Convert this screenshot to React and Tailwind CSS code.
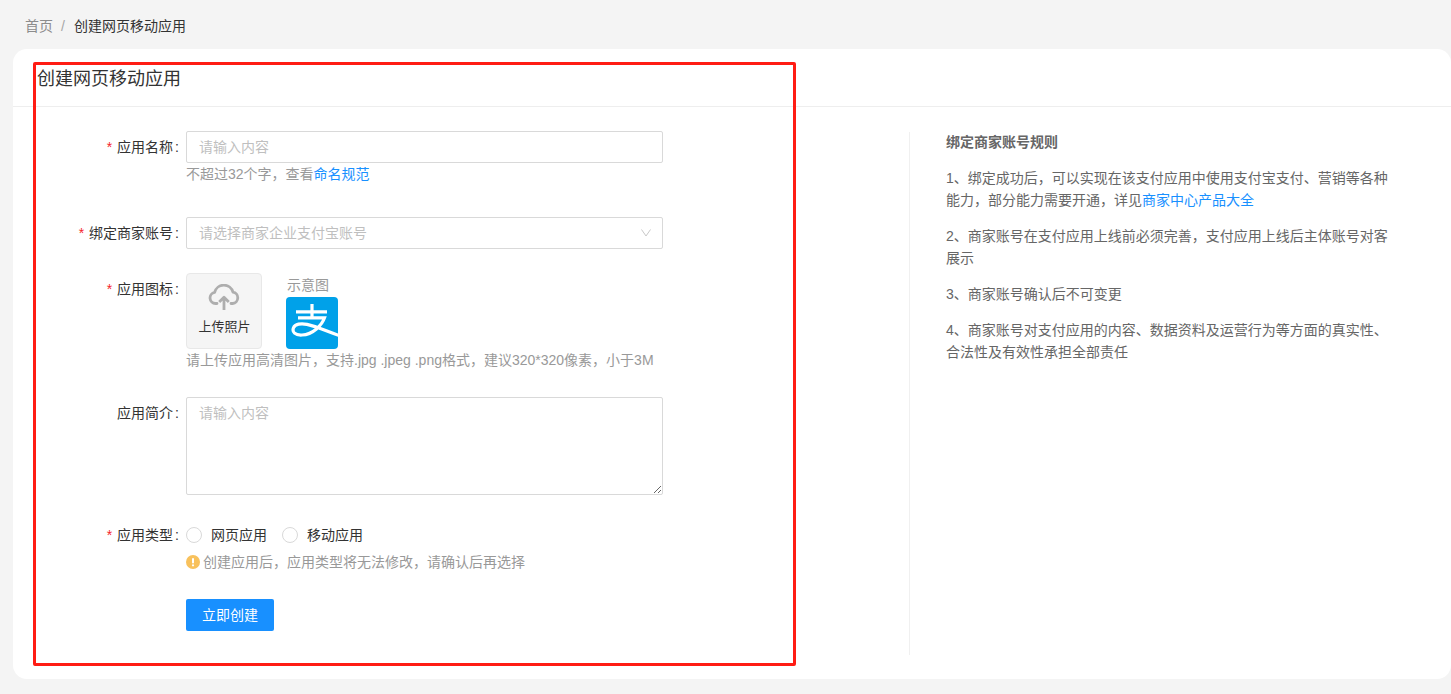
import React from 'react';

const FONT = "font-['Liberation_Sans','Noto_Sans_CJK_SC',sans-serif]";

const FormRow = ({ label, required, labelClass = 'h-[32px]', className = '', children }) => (
    <div className={`flex items-start ${className}`}>
        <div className={`w-[166px] mr-[7px] shrink-0 flex items-center justify-end text-[#333] ${labelClass}`}>
            {required && <span className="text-[#f5222d] mr-[5px]">*</span>}
            {label}<span className="ml-[2px]">:</span>
        </div>
        <div className="min-w-0">{children}</div>
    </div>
);

const CloudIcon = () => (
    <svg width="32" height="28" viewBox="0 0 32 28" fill="none" stroke="#aeaeae" strokeWidth="2.8">
        <path d="M9 19.5H7.5A5.6 5.6 0 0 1 6.6 8.4 A9.5 9.5 0 0 1 25 8.2 A5.7 5.7 0 0 1 24.6 19.5H23" strokeLinecap="round" strokeLinejoin="round" />
        <path d="M16 26V14M11.2 18l4.8-4.8 4.8 4.8" strokeLinejoin="round" />
    </svg>
);

const AlipayLogo = () => (
    <svg width="52" height="52" viewBox="0 0 52 52" fill="none" className="block rounded-[4px]">
        <rect width="52" height="52" fill="#00a1e9" />
        <g stroke="#fff" strokeWidth="3.2">
            <path d="M10 14.8H41M26 7V21" />
            <path d="M12 20.8H38.5C36 28 27 37.6 16 38C9 38.4 6 35 7.4 31C9 27 15 26 21 27.4C31 29.6 40 34 53 38.5" />
        </g>
    </svg>
);

const App = () => (
    <div className={`relative h-[694px] bg-[#f4f4f4] overflow-hidden text-[14px] leading-[22px] ${FONT}`}>
        {/* breadcrumb */}
        <div className="h-[49px] pl-[25px] pt-[15px] flex items-start">
            <span className="text-[#8c8c8c]">首页</span>
            <span className="text-[#a6a6a6] ml-[8px] mr-[9px]">/</span>
            <span className="text-[#333]">创建网页移动应用</span>
        </div>

        <div className="ml-[13px] h-[630px] bg-white rounded-[14px]">
            <div className="h-[58px] pl-[24px] pt-[16px] border-b border-[#eeeeee] text-[18px] leading-[28px] text-[#333]">
                创建网页移动应用
            </div>

            <div className="flex">
                {/* form */}
                <div className="w-[896px] shrink-0 pt-[24px]">
                    <FormRow label="应用名称" required>
                        <input
                            placeholder="请输入内容"
                            className="block w-[477px] h-[32px] px-[12px] border border-[#d9d9d9] rounded-[2px] placeholder:text-[#bfbfbf] outline-none"
                        />
                        <div className="text-[#999]">不超过32个字，查看<span className="text-[#1890ff]">命名规范</span></div>
                    </FormRow>

                    <FormRow label="绑定商家账号" required className="mt-[32px]">
                        <div className="w-[477px] h-[32px] px-[12px] border border-[#d9d9d9] rounded-[2px] flex items-center justify-between text-[#bfbfbf]">
                            <span>请选择商家企业支付宝账号</span>
                            <svg width="10" height="8" viewBox="0 0 10 8" fill="none" stroke="#c8c8c8" className="mr-[-1px]">
                                <path d="M0.5 0.5L5 7L9.5 0.5" />
                            </svg>
                        </div>
                    </FormRow>

                    <FormRow label="应用图标" required className="mt-[24px]">
                        <div className="flex items-start gap-[24px]">
                            <div className="w-[76px] h-[76px] bg-[#f5f5f5] border border-[#e8e8e8] rounded-[4px] flex flex-col items-center pt-[10px]">
                                <CloudIcon />
                                <span className="mt-[5px] ml-[1px] text-[13px] leading-[20px] text-[#333]">上传照片</span>
                            </div>
                            <div>
                                <div className="h-[24px] leading-[24px] pl-[1px] text-[#999]">示意图</div>
                                <AlipayLogo />
                            </div>
                        </div>
                        <div className="text-[#999] whitespace-nowrap">请上传应用高清图片，支持.jpg .jpeg .png格式，建议320*320像素，小于3M</div>
                    </FormRow>

                    <FormRow label="应用简介" className="mt-[26px]">
                        <textarea
                            placeholder="请输入内容"
                            className="block w-[477px] h-[98px] px-[12px] py-[4px] border border-[#d9d9d9] rounded-[2px] placeholder:text-[#bfbfbf] outline-none"
                        />
                    </FormRow>

                    <FormRow label="应用类型" required labelClass="h-[22px]" className="mt-[29px]">
                        <div className="flex items-center h-[22px] text-[#333]">
                            <span className="w-[16px] h-[16px] rounded-full border border-[#d9d9d9] mr-[9px]" />
                            <span className="mr-[15px]">网页应用</span>
                            <span className="w-[16px] h-[16px] rounded-full border border-[#d9d9d9] mr-[9px]" />
                            <span>移动应用</span>
                        </div>
                        <div className="mt-[5px] flex items-center text-[#999]">
                            <svg width="14" height="14" viewBox="0 0 14 14" className="mr-[3px]">
                                <circle cx="7" cy="7" r="7" fill="#f8c15c" />
                                <rect x="6" y="3" width="2" height="5.4" rx="1" fill="#fff" />
                                <circle cx="7" cy="10.3" r="1.1" fill="#fff" />
                            </svg>
                            创建应用后，应用类型将无法修改，请确认后再选择
                        </div>
                        <button className="mt-[26px] w-[88px] h-[32px] bg-[#1890ff] rounded-[2px] text-white">立即创建</button>
                    </FormRow>
                </div>

                {/* rules */}
                <div className="mt-[25px] h-[523px] border-l border-[#f0f0f0] pl-[36px] w-[480px] text-[#666]">
                    <div className="font-bold mb-[14px] -mt-[1px]">绑定商家账号规则</div>
                    <p className="mb-[14px] w-[444px]">1、绑定成功后，可以实现在该支付应用中使用支付宝支付、营销等各种能力，部分能力需要开通，详见<span className="text-[#1890ff]">商家中心产品大全</span></p>
                    <p className="mb-[14px] w-[444px]">2、商家账号在支付应用上线前必须完善，支付应用上线后主体账号对客展示</p>
                    <p className="mb-[14px] w-[444px]">3、商家账号确认后不可变更</p>
                    <p className="w-[444px]">4、商家账号对支付应用的内容、数据资料及运营行为等方面的真实性、合法性及有效性承担全部责任</p>
                </div>
            </div>
        </div>

        {/* red annotation frame */}
        <div className="absolute left-[33px] top-[62px] w-[763px] h-[604px] border-[3px] border-[#ff1c14] rounded-[2px] pointer-events-none" />
    </div>
);

export default App;
